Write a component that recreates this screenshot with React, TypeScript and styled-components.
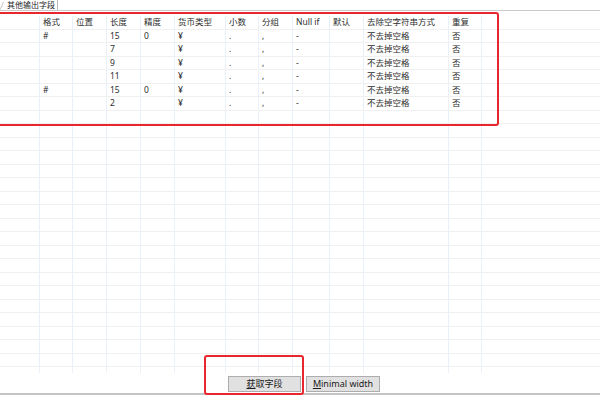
import styled, { createGlobalStyle } from 'styled-components';

const Global = createGlobalStyle`
  html, body {
    margin: 0;
    padding: 0;
    background: #ffffff;
  }
  * {
    box-sizing: border-box;
  }
`;

const Page = styled.div`
  position: relative;
  width: 600px;
  height: 400px;
  overflow: hidden;
  display: flex;
  flex-direction: column;
  font-family: "Noto Sans", "Noto Sans CJK SC", sans-serif;
  color: #2b2b2b;
  background: #ffffff;
`;

const TabStrip = styled.div`
  height: 11px;
  border-bottom: 1px solid #c9c9c9;
  display: flex;
  align-items: stretch;
`;

const Tab = styled.div`
  position: relative;
  width: 58px;
  padding-left: 7px;
  border-right: 1px solid #b9b9b9;
  font-size: 8px;
  line-height: 10px;
  color: #1e1e1e;
  white-space: nowrap;
  &::before {
    content: '';
    position: absolute;
    left: 1px;
    top: 2px;
    width: 1px;
    height: 9px;
    background: #c4c4c4;
    transform: skewX(-25deg);
  }
`;

const Grid = styled.div`
  margin-top: 5px;
  height: 357px;
  overflow: hidden;
  display: flex;
  flex-direction: column;
`;

const COLS = '40px 33px 34px 34px 34px 51px 33px 34px 37px 34px 85px 33px 1fr';

const Row = styled.div`
  flex: none;
  display: grid;
  grid-template-columns: ${COLS};
  height: 13.5px;
  border-bottom: 1px solid #f0f0f0;
`;

const Cell = styled.div<{ $last?: boolean }>`
  padding-left: 3px;
  border-right: ${(p) => (p.$last ? 'none' : '1px solid #eaf0f7')};
  font-size: 8.5px;
  line-height: 12.5px;
  white-space: nowrap;
  overflow: hidden;
  color: #2e2e2e;
`;

const Footer = styled.div`
  height: 22px;
  display: flex;
  justify-content: center;
  align-items: flex-start;
  gap: 5px;
  padding-top: 3px;
  padding-left: 8px;
  border-bottom: 2px solid #c4c4c4;
`;

const Button = styled.div<{ $w: number }>`
  width: ${(p) => p.$w}px;
  height: 16px;
  background: #e1e1e1;
  border: 1px solid #adadad;
  display: flex;
  justify-content: center;
  align-items: center;
  font-size: 9px;
  line-height: 14px;
  color: #1a1a1a;
  white-space: nowrap;
  u {
    text-decoration: underline;
    text-underline-offset: 1px;
  }
`;

const Mark = styled.div`
  position: absolute;
  border: 2px solid #e8262d;
  border-radius: 3px;
  pointer-events: none;
`;

const headers = ['', '格式', '位置', '长度', '精度', '货币类型', '小数', '分组', 'Null if', '默认', '去除空字符串方式', '重复', ''];

const data: string[][] = [
  ['', '#', '', '15', '0', '¥', '.', ',', '-', '', '不去掉空格', '否', ''],
  ['', '', '', '7', '', '¥', '.', ',', '-', '', '不去掉空格', '否', ''],
  ['', '', '', '9', '', '¥', '.', ',', '-', '', '不去掉空格', '否', ''],
  ['', '', '', '11', '', '¥', '.', ',', '-', '', '不去掉空格', '否', ''],
  ['', '#', '', '15', '0', '¥', '.', ',', '-', '', '不去掉空格', '否', ''],
  ['', '', '', '2', '', '¥', '.', ',', '-', '', '不去掉空格', '否', ''],
];

const blank = Array.from({ length: 20 }, () => Array(13).fill(''));

function App() {
  const rows = [headers, ...data, ...blank];
  return (
    <Page>
      <Global />
      <TabStrip>
        <Tab>其他输出字段</Tab>
      </TabStrip>
      <Grid>
        {rows.map((r, i) => (
          <Row key={i}>
            {r.map((c, j) => (
              <Cell key={j} $last={j === r.length - 1}>
                {c}
              </Cell>
            ))}
          </Row>
        ))}
      </Grid>
      <Footer>
        <Button $w={73}>
          <span><u>获</u>取字段</span>
        </Button>
        <Button $w={74}>
          <span><u>M</u>inimal width</span>
        </Button>
      </Footer>
      <Mark style={{ left: -10, top: 12, width: 509, height: 114 }} />
      <Mark style={{ left: 204, top: 355, width: 100, height: 40 }} />
    </Page>
  );
}

export default App;
